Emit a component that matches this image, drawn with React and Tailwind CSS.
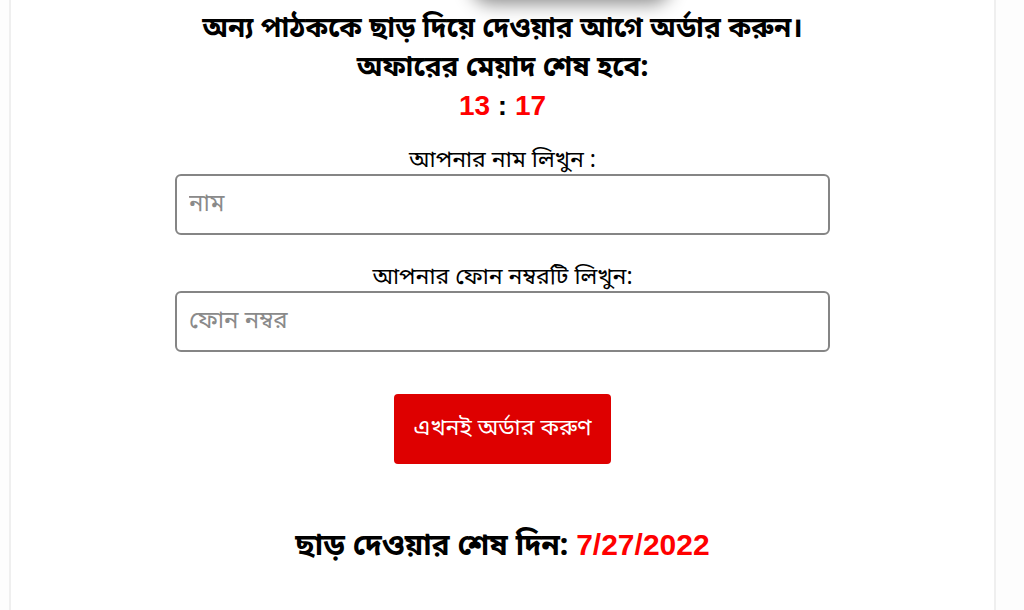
import { useState } from 'react';

function Field({ label, placeholder, value, onChange }) {
  return (
    <div className="flex flex-col items-center">
      <label className="text-[23px] leading-[28px] text-black">{label}</label>
      <input
        value={value}
        onChange={(e) => onChange(e.target.value)}
        placeholder={placeholder}
        className="mt-[-1px] h-[61px] w-[655px] rounded-[6px] border-2 border-[#858585] bg-white px-[12px] text-[24px] text-black outline-none placeholder:text-[#8a8a8a]"
      />
    </div>
  );
}

export default function App() {
  const [name, setName] = useState('');
  const [phone, setPhone] = useState('');

  return (
    <div
      className="min-h-screen bg-[#fdfdfd]"
      style={{ fontFamily: '"Noto Sans Bengali", "Noto Sans", sans-serif' }}
    >
      <div className="ml-[9px] mr-[28px] h-[610px] overflow-hidden border-x-2 border-[#efefef] bg-white">
        <div className="ml-[460px] -mt-[40px] h-[40px] w-[200px] rounded-full shadow-[0_4px_18px_rgba(0,0,0,0.45)]" />

        <div className="mt-[10px] flex flex-col items-center text-center">
          <h2 className="text-[28px] font-bold leading-[39px] text-black">
            অন্য পাঠককে ছাড় দিয়ে দেওয়ার আগে অর্ডার করুন।
          </h2>
          <h2 className="text-[28px] font-bold leading-[39px] text-black">অফারের মেয়াদ শেষ হবে:</h2>
          <div className="mt-[2px] text-[28px] font-bold leading-[32px]" style={{ fontFamily: '"Liberation Sans", Arial, sans-serif' }}>
            <span className="text-[#ff0000]">13</span>
            <span className="text-black"> : </span>
            <span className="text-[#ff0000]">17</span>
          </div>

          <div className="mt-[25px] flex flex-col gap-[29px]">
            <Field label="আপনার নাম লিখুন :" placeholder="নাম" value={name} onChange={setName} />
            <Field label="আপনার ফোন নম্বরটি লিখুন:" placeholder="ফোন নম্বর" value={phone} onChange={setPhone} />
          </div>

          <button className="mt-[42px] h-[70px] w-[217px] rounded-[4px] bg-[#de0000] text-[23px] text-white">
            এখনই অর্ডার করুণ
          </button>

          <div className="mt-[62px] text-[30px] font-bold leading-[38px] text-black">
            ছাড় দেওয়ার শেষ দিন:{' '}
            <span className="text-[#ff0000]" style={{ fontFamily: '"Liberation Sans", Arial, sans-serif' }}>
              7/27/2022
            </span>
          </div>
        </div>
      </div>
    </div>
  );
}
